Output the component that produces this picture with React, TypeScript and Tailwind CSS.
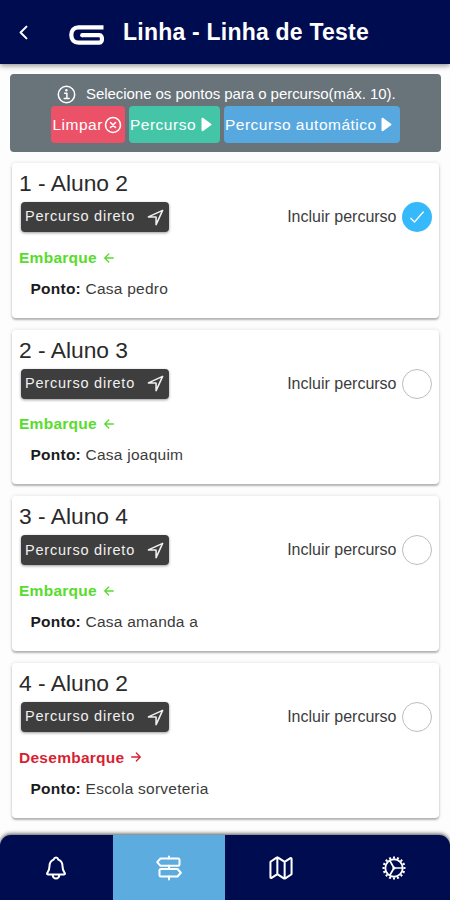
import React from "react";
import {
  IoArrowBack,
  IoArrowForward,
  IoCheckmarkOutline,
  IoChevronBack,
  IoCloseCircleOutline,
  IoMapOutline,
  IoNavigateOutline,
  IoNotificationsOutline,
} from "react-icons/io5";

type Stop = { title: string; boarding: boolean; place: string; selected: boolean };

const stops: Stop[] = [
  { title: "1 - Aluno 2", boarding: true, place: "Casa pedro", selected: true },
  { title: "2 - Aluno 3", boarding: true, place: "Casa joaquim", selected: false },
  { title: "3 - Aluno 4", boarding: true, place: "Casa amanda a", selected: false },
  { title: "4 - Aluno 2", boarding: false, place: "Escola sorveteria", selected: false },
];

function Logo() {
  return (
    <svg width="36" height="20" viewBox="0 0 36 20" fill="none" stroke="#fff" strokeWidth="4.200" strokeLinejoin="round">
      <path d="M34.500 2.300H9.500C5 2.300 2.300 5.500 2.300 10S5 17.600 9.500 17.600H30.500C33.800 17.600 33.800 10.200 30.500 10.200H13" />
      <path d="M13.200 10.200h.1" strokeLinecap="round" />
    </svg>
  );
}

function InfoIcon() {
  return (
    <svg width="21" height="21" viewBox="0 0 21 21" fill="none" stroke="#fff" strokeWidth="1.500">
      <circle cx="10.500" cy="10.500" r="8.200" />
      <path d="M8.600 9.200h2.300v5M8.200 14.600h5" strokeLinecap="round" strokeLinejoin="round" />
      <circle cx="10.400" cy="6.300" r="1.200" fill="#fff" stroke="none" />
    </svg>
  );
}

function SignsIcon() {
  return (
    <svg width="26" height="26" viewBox="0 0 26 26" fill="none" stroke="#fff" strokeWidth="2" strokeLinejoin="round" strokeLinecap="round">
      <path d="M13 1.500v2M13 10.800v3M13 21.500v3" />
      <path d="M4.500 3.500H22a1.500 1.500 0 0 1 1.500 1.500v4.300a1.500 1.500 0 0 1-1.500 1.500H4.500L1.200 7.100z" />
      <path d="M21.500 14H5a1.500 1.500 0 0 0-1.500 1.500V20A1.500 1.500 0 0 0 5 21.500h16.500l3.300-3.750z" />
    </svg>
  );
}

function CogIcon() {
  return (
    <svg width="26" height="26" viewBox="0 0 26 26" fill="none" stroke="#fff" strokeWidth="1.900">
      <circle cx="13" cy="13" r="8.700" />
      <circle cx="13" cy="13" r="10.500" strokeWidth="2" pathLength="32" strokeDasharray="1 1" strokeDashoffset="0.500" />
      <circle cx="13" cy="13" r="1.600" fill="#fff" stroke="none" />
      <path d="M13 13h8.500M13 13 8.700 5.500M13 13l-4.300 7.500" strokeWidth="1.700" />
    </svg>
  );
}

function PlayIcon() {
  return (
    <svg className="ml-[4.500px] shrink-0" width="11" height="15" viewBox="0 0 11 15" fill="#fff">
      <path d="M.5 2c0-1 1-1.500 1.700-.9L10 6.700c.6.500.6 1.100 0 1.600l-7.800 5.600C1.500 14.500.5 14 .5 13z" />
    </svg>
  );
}

function StopCard({ stop }: { stop: Stop }) {
  return (
    <article className="h-[154.700px] shrink-0 rounded-[4px] bg-white pl-[7px] pr-[7px] pt-[6px] shadow-[0_2px_2px_rgba(0,0,0,0.26),0_0_4px_rgba(0,0,0,0.12)]">
      <h2 className="h-[28px] text-[22.800px] leading-[28px] text-[#2a2a2a]">{stop.title}</h2>
      <div className="mt-[5px] flex h-[30px] items-center justify-between">
        <button className="ml-[2px] flex h-[30px] w-[148px] items-center justify-between rounded-[4px] bg-[#3e3e3e] pl-[4px] pr-[4px] text-[14.500px] tracking-[0.780px] text-[#f0f0f0] shadow-[0_1px_3px_rgba(0,0,0,0.4)]">
          <span>Percurso direto</span>
          <IoNavigateOutline size={19} className="[&_path]:[stroke-width:42px]" />
        </button>
        <label className="flex items-center gap-[5.500px] text-[16px] text-[#3c3c3c]">
          <span>Incluir percurso</span>
          {stop.selected ? (
            <span className="flex size-[30px] items-center justify-center rounded-full bg-[#36b9fb] text-white">
              <IoCheckmarkOutline size={20} />
            </span>
          ) : (
            <span className="size-[30px] rounded-full border border-[#bdbdbd]" />
          )}
        </label>
      </div>
      <p className={`mt-[14.200px] flex h-[22px] items-center gap-[5px] text-[15.500px] font-bold tracking-[0.270px] ${stop.boarding ? "text-[#57dc2c]" : "text-[#d91f32]"}`}>
        <span>{stop.boarding ? "Embarque" : "Desembarque"}</span>
        {stop.boarding ? <IoArrowBack size={14} className="mt-px" /> : <IoArrowForward size={14} />}
      </p>
      <p className="ml-[11.500px] mt-[9.500px] h-[22px] text-[15.500px] leading-[22px] tracking-[0.240px] text-[#3c3c3c]">
        <b className="text-[#1c1c1c]">Ponto:</b> {stop.place}
      </p>
    </article>
  );
}

export default function App() {
  return (
    <div className="flex h-[900px] w-[450px] flex-col overflow-hidden bg-[#fdfdfd] font-['Liberation_Sans',Arial,sans-serif]">
      <header className="flex h-[64px] shrink-0 items-center bg-[#000c50] text-white shadow-[0_2px_5px_rgba(0,0,0,0.4)]">
        <div className="ml-[13px] flex w-[56px] items-center">
          <IoChevronBack size={21} />
        </div>
        <div className="mt-[5px]">
          <Logo />
        </div>
        <h1 className="ml-[18px] mt-px text-[23px] font-bold tracking-[0.220px]">Linha - Linha de Teste</h1>
      </header>

      <section className="mx-[10px] mt-[10px] flex h-[78px] w-[431px] shrink-0 flex-col rounded-[4px] bg-[#68737a] pt-[9px] text-[15px] text-white">
        <div className="ml-[46px] flex h-[22px] items-center gap-[9px]">
          <InfoIcon />
          <span className="whitespace-nowrap tracking-[-0.050px]">Selecione os pontos para o percurso(máx. 10).</span>
        </div>
        <div className="ml-[41px] mt-px flex gap-[4px] whitespace-nowrap text-[15.500px] tracking-[0.500px]">
          <button className="flex h-[37px] w-[74px] items-center rounded-[4px] bg-[#ec5267] pl-[1.500px]">
            Limpar
            <IoCloseCircleOutline size={20} className="shrink-0 [&_path]:[stroke-width:40px]" />
          </button>
          <button className="flex h-[37px] w-[91px] items-center rounded-[4px] bg-[#45c5a8] pl-px">
            Percurso
            <PlayIcon />
          </button>
          <button className="flex h-[37px] w-[176px] items-center rounded-[4px] bg-[#57a8df] pl-px">
            Percurso automático
            <PlayIcon />
          </button>
        </div>
      </section>

      <main className="ml-[12px] mt-[11px] flex w-[427px] flex-1 flex-col gap-[12px]">
        {stops.map((stop) => (
          <StopCard key={stop.title} stop={stop} />
        ))}
      </main>

      <nav className="grid h-[65px] shrink-0 grid-cols-4 overflow-hidden rounded-t-[11px] bg-[#000c50] text-white shadow-[0_-1px_4px_rgba(0,0,0,0.7)] [&>div]:flex [&>div]:items-center [&>div]:justify-center">
        <div>
          <IoNotificationsOutline size={26} className="[&_path]:[stroke-width:40px]" />
        </div>
        <div className="bg-[#5dacdf]">
          <SignsIcon />
        </div>
        <div>
          <IoMapOutline size={26} className="[&_path]:[stroke-width:40px]" />
        </div>
        <div>
          <CogIcon />
        </div>
      </nav>
    </div>
  );
}
